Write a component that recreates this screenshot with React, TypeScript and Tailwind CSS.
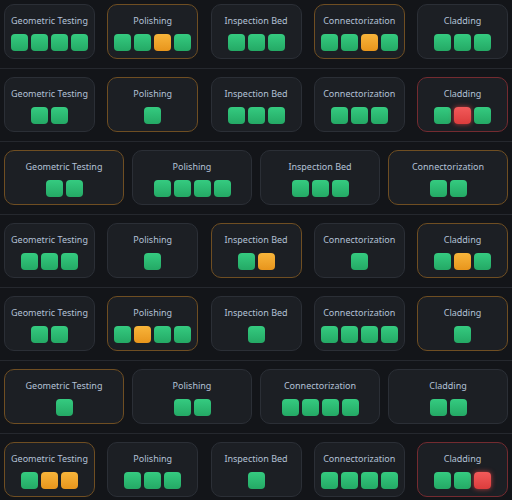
import React from 'react';

type Status = 'ok' | 'warn' | 'fail';
type Station = { name: string; border: 'none' | 'warn' | 'fail'; units: Status[] };

const g: Status = 'ok';
const a: Status = 'warn';
const r: Status = 'fail';

const lines: Station[][] = [
  [
    { name: 'Geometric Testing', border: 'none', units: [g, g, g, g] },
    { name: 'Polishing', border: 'warn', units: [g, g, a, g] },
    { name: 'Inspection Bed', border: 'none', units: [g, g, g] },
    { name: 'Connectorization', border: 'warn', units: [g, g, a, g] },
    { name: 'Cladding', border: 'none', units: [g, g, g] },
  ],
  [
    { name: 'Geometric Testing', border: 'none', units: [g, g] },
    { name: 'Polishing', border: 'warn', units: [g] },
    { name: 'Inspection Bed', border: 'none', units: [g, g, g] },
    { name: 'Connectorization', border: 'none', units: [g, g, g] },
    { name: 'Cladding', border: 'fail', units: [g, r, g] },
  ],
  [
    { name: 'Geometric Testing', border: 'warn', units: [g, g] },
    { name: 'Polishing', border: 'none', units: [g, g, g, g] },
    { name: 'Inspection Bed', border: 'none', units: [g, g, g] },
    { name: 'Connectorization', border: 'warn', units: [g, g] },
  ],
  [
    { name: 'Geometric Testing', border: 'none', units: [g, g, g] },
    { name: 'Polishing', border: 'none', units: [g] },
    { name: 'Inspection Bed', border: 'warn', units: [g, a] },
    { name: 'Connectorization', border: 'none', units: [g] },
    { name: 'Cladding', border: 'warn', units: [g, a, g] },
  ],
  [
    { name: 'Geometric Testing', border: 'none', units: [g, g] },
    { name: 'Polishing', border: 'warn', units: [g, a, g, g] },
    { name: 'Inspection Bed', border: 'none', units: [g] },
    { name: 'Connectorization', border: 'none', units: [g, g, g, g] },
    { name: 'Cladding', border: 'warn', units: [g] },
  ],
  [
    { name: 'Geometric Testing', border: 'warn', units: [g] },
    { name: 'Polishing', border: 'none', units: [g, g] },
    { name: 'Connectorization', border: 'none', units: [g, g, g, g] },
    { name: 'Cladding', border: 'none', units: [g, g] },
  ],
  [
    { name: 'Geometric Testing', border: 'warn', units: [g, a, a] },
    { name: 'Polishing', border: 'none', units: [g, g, g] },
    { name: 'Inspection Bed', border: 'none', units: [g] },
    { name: 'Connectorization', border: 'none', units: [g, g, g, g] },
    { name: 'Cladding', border: 'fail', units: [g, g, r] },
  ],
];

const unitClass: Record<Status, string> = {
  ok: 'bg-gradient-to-b from-[#35cb80] to-[#24a965]',
  warn: 'bg-gradient-to-b from-[#f8b53a] to-[#e8951b]',
  fail: 'bg-gradient-to-b from-[#f25a5a] to-[#dc3c3c] shadow-[0_0_5px_rgba(239,68,68,0.75)]',
};

const borderClass = {
  none: 'border-[#2b2f36]',
  warn: 'border-[#6f4e22]',
  fail: 'border-[#742b30]',
};

function StationCard({ station, wide }: { station: Station; wide: boolean }) {
  return (
    <div
      className={`${wide ? 'w-[120px]' : 'w-[91px]'} h-[55px] flex flex-col items-center pt-[9px] rounded-[10px] border bg-[#1c1f24] ${borderClass[station.border]}`}
    >
      <div className="text-[9px] leading-[14px] text-[#b3c1d6] whitespace-nowrap">{station.name}</div>
      <div className="flex gap-[3px] mt-[6px]">
        {station.units.map((u, i) => (
          <span key={i} className={`w-[17px] h-[17px] rounded-[4px] ${unitClass[u]}`} />
        ))}
      </div>
    </div>
  );
}

export default function App() {
  return (
    <div className="min-h-screen bg-[#131519]" style={{ fontFamily: '"Noto Sans", sans-serif' }}>
      {lines.map((line, i) => (
        <div
          key={i}
          className={`flex justify-between px-1 ${i === 0 ? 'pt-1' : 'pt-2'} pb-[9px] border-b border-[#25282e]`}
        >
          {line.map((s, j) => (
            <StationCard key={j} station={s} wide={line.length === 4} />
          ))}
        </div>
      ))}
    </div>
  );
}
